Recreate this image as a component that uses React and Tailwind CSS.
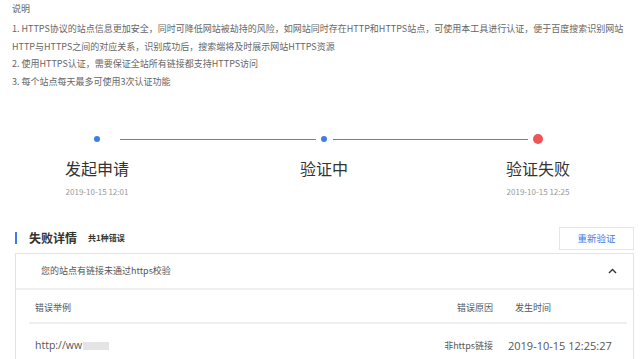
import React from 'react';

const font = { fontFamily: '"Noto Sans CJK SC", "Noto Sans", sans-serif' };
const latin = { fontFamily: '"Open Sans", "Noto Sans CJK SC", sans-serif' };

function Notes() {
  return (
    <div className="pl-[12px] text-[9px] text-[#666]">
      <div className="h-[18px] leading-[18px]">说明</div>
      <div className="mt-[2px] leading-[17.5px]">
        <p>1. HTTPS协议的站点信息更加安全，同时可降低网站被劫持的风险，如网站同时存在HTTP和HTTPS站点，可使用本工具进行认证，便于百度搜索识别网站</p>
        <p>HTTP与HTTPS之间的对应关系，识别成功后，搜索端将及时展示网站HTTPS资源</p>
        <p>2. 使用HTTPS认证，需要保证全站所有链接都支持HTTPS访问</p>
        <p>3. 每个站点每天最多可使用3次认证功能</p>
      </div>
    </div>
  );
}

function Steps() {
  return (
    <div className="mt-[43px]">
      {/* dots and lines */}
      <div className="flex items-center h-[12px]">
        <div className="w-[94px]" />
        <div className="w-[6px] h-[6px] rounded-full bg-[#3d7de6]" />
        <div className="w-[20px]" />
        <div className="w-[196px] h-px bg-[#4a86e8]" />
        <div className="w-[5px]" />
        <div className="w-[6px] h-[6px] rounded-full bg-[#3d7de6]" />
        <div className="w-[6px]" />
        <div className="w-[195px] h-px bg-[#4a86e8]" />
        <div className="w-[5px]" />
        <div className="w-[10px] h-[10px] rounded-full bg-[#ef5458]" />
      </div>
      <div className="flex mt-[12px]">
        <div className="w-[194px] flex flex-col items-center">
          <div className="text-[16px] leading-[22px] text-[#333]">发起申请</div>
          <div className="mt-[8px] text-[8px] leading-[10px] text-[#999]">2019-10-15 12:01</div>
        </div>
        <div className="w-[260px] flex flex-col items-center">
          <div className="text-[16px] leading-[22px] text-[#333]">验证中</div>
        </div>
        <div className="w-[168px] flex flex-col items-center">
          <div className="text-[16px] leading-[22px] text-[#333]">验证失败</div>
          <div className="mt-[8px] text-[8px] leading-[10px] text-[#999]">2019-10-15 12:25</div>
        </div>
      </div>
    </div>
  );
}

function Details() {
  return (
    <div className="mt-[29px] pl-[15px] pr-[6px]">
      <div className="flex items-center justify-between h-[24px]">
        <div className="flex items-center">
          <div className="w-[2px] h-[12px] bg-[#3d7de6]" />
          <span className="ml-[12px] text-[12px] font-bold text-[#333]">失败详情</span>
          <span className="ml-[11px] text-[8px] font-bold text-[#333]">共1种错误</span>
        </div>
        <button className="w-[75px] h-[23px] border border-[#e3e6ec] text-[9.5px] text-[#3d7de6] bg-white">
          重新验证
        </button>
      </div>
      <div className="mt-[3px] border border-[#e3e3e3] border-b-0">
        <div className="flex items-center justify-between h-[36px] pl-[25px] pr-[16px] border-b-2 border-[#efefef]">
          <span className="text-[9px] text-[#555]">您的站点有链接未通过https校验</span>
          <svg width="9" height="6" viewBox="0 0 9 6" fill="none">
            <path d="M1 5L4.5 1.5L8 5" stroke="#333" strokeWidth="1.4" />
          </svg>
        </div>
        <div className="pl-[13px] pr-[6px] text-[9px] text-[#555]">
          <div className="flex items-center h-[31px] mt-[3px] border-b-2 border-[#efefef] pl-[6px]">
            <span className="flex-1">错误举例</span>
            <span className="w-[80px] text-right">错误原因</span>
            <span className="w-[134px] pl-[22px]">发生时间</span>
          </div>
          <div className="flex items-center h-[44px] pl-[6px] text-[10.5px]" style={latin}>
            <span className="flex-1 flex items-center">
              http://ww
              <span className="ml-[1px] inline-block w-[26px] h-[8px] bg-[#e4e4e4]" />
            </span>
            <span className="w-[80px] text-right text-[9px]" style={font}>非https链接</span>
            <span className="w-[134px] pl-[15px] text-[11px]">2019-10-15 12:25:27</span>
          </div>
        </div>
      </div>
    </div>
  );
}

export default function App() {
  return (
    <div className="w-[640px] h-[359px] overflow-hidden bg-white" style={font}>
      <Notes />
      <Steps />
      <Details />
    </div>
  );
}
